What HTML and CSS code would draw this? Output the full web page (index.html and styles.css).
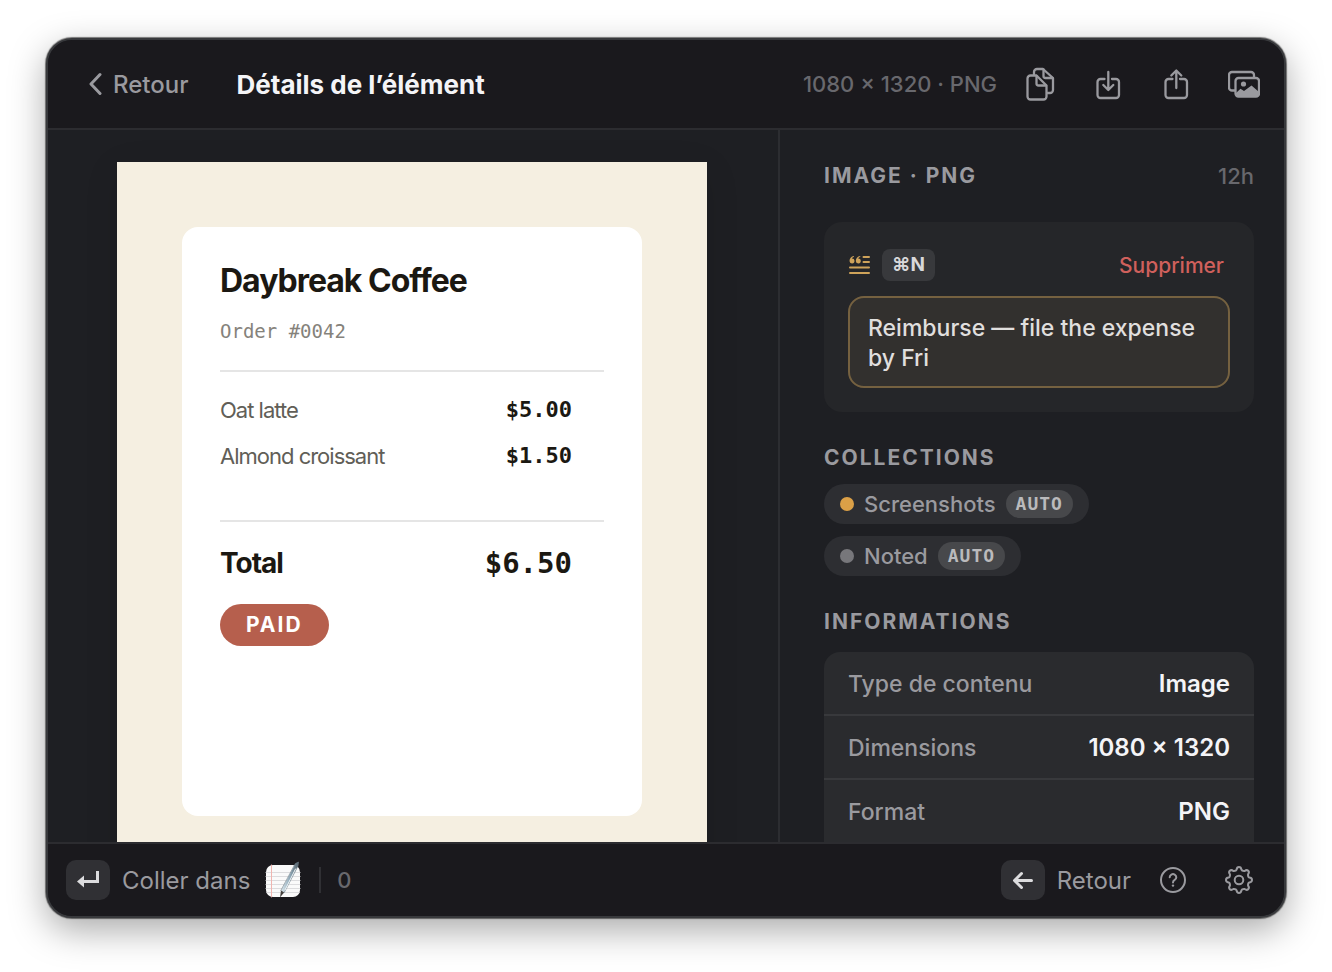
FILE: index.html
```html
<!DOCTYPE html>
<html lang="fr">
    <head>
        <meta charset="utf-8">
        <meta name="viewport" content="width=device-width, initial-scale=1">
        <title>Détails de l’élément</title>
        <link rel="stylesheet" href="styles.css">
    </head>
    <body>
        <div class="window">
            <header class="topbar">
                <button class="back" type="button">
                    <svg class="chevron" viewBox="0 0 14 24"><path d="M12 2.500 3 12l9 9.500"/></svg>
                    Retour
                </button>
                <h1>Détails de l’élément</h1>
                <span class="meta">1080 × 1320 · PNG</span>
                <div class="tools">
                    <button class="tool" type="button" aria-label="Copier">
                        <svg viewBox="0 0 32 34">
                            <path d="M10 7.500V5a3 3 0 0 1 3-3h6L29 11v12a3 3 0 0 1-3 3h-2.500"/>
                            <path d="M19.500 2.500v6.500a2 2 0 0 0 2 2h7"/>
                            <path d="M6.500 8.500h6L22.500 18.500V29.500a3 3 0 0 1-3 3h-13a3 3 0 0 1-3-3v-18a3 3 0 0 1 3-3z"/>
                            <path d="M12.500 9v7.500a2 2 0 0 0 2 2h7.500"/>
                        </svg>
                    </button>
                    <button class="tool" type="button" aria-label="Enregistrer">
                        <svg viewBox="0 0 32 34">
                            <path d="M12.500 12H8.500a3 3 0 0 0-3 3v13a3 3 0 0 0 3 3h15.500a3 3 0 0 0 3-3V15a3 3 0 0 0-3-3h-4"/>
                            <path d="M16.300 5v17.500M11.300 18l5 5 5-5"/>
                        </svg>
                    </button>
                    <button class="tool" type="button" aria-label="Partager">
                        <svg viewBox="0 0 32 34">
                            <path d="M12.500 12H8.500a3 3 0 0 0-3 3v13a3 3 0 0 0 3 3h15.500a3 3 0 0 0 3-3V15a3 3 0 0 0-3-3h-4"/>
                            <path d="M16.300 21V4M11.300 8.500l5-5 5 5"/>
                        </svg>
                    </button>
                    <button class="tool" type="button" aria-label="Images">
                        <svg viewBox="0 0 32 34">
                            <path d="M7 23.500H4a3 3 0 0 1-3-3V8a3 3 0 0 1 3-3h19a3 3 0 0 1 3 3v2.500"/>
                            <rect x="7.500" y="11" width="23.500" height="18.500" rx="3"/>
                            <circle class="solid" cx="15.500" cy="17" r="2.600"/>
                            <path class="solid" d="M8 26l4.500-4.300 3.500 2.300 7.500-5.500 7.500 6.500v2a3 3 0 0 1-3 3H11a3 3 0 0 1-3-3z"/>
                        </svg>
                    </button>
                </div>
            </header>

            <main class="content">
                <section class="preview">
                    <div class="shot">
                        <div class="receipt">
                            <h2>Daybreak Coffee</h2>
                            <p class="order">Order #0042</p>
                            <dl class="items">
                                <div class="item"><dt>Oat latte</dt><dd>$5.00</dd></div>
                                <div class="item"><dt>Almond croissant</dt><dd>$1.50</dd></div>
                            </dl>
                            <dl class="total">
                                <div class="item"><dt>Total</dt><dd>$6.50</dd></div>
                            </dl>
                            <span class="paid">PAID</span>
                        </div>
                    </div>
                </section>

                <aside class="details">
                    <div class="kind">
                        <h2 class="label">IMAGE · PNG</h2>
                        <span class="age">12h</span>
                    </div>

                    <div class="note">
                        <div class="note-head">
                            <svg class="quote" viewBox="0 0 22 20">
                                <path d="M15.500 2h5.500M15.500 7h5.500M2 12.500h19M2 18h19"/>
                                <path class="solid" d="M6 1C3 1.300 1.500 3.500 1.500 6a2.500 2.500 0 1 0 2.300-2.500C4.200 2.600 5 2 6 1.700zM12.300 1C9.300 1.300 7.800 3.500 7.800 6a2.500 2.500 0 1 0 2.300-2.500c.4-.9 1.200-1.500 2.200-1.800z"/>
                            </svg>
                            <kbd>⌘N</kbd>
                            <button class="delete" type="button">Supprimer</button>
                        </div>
                        <textarea rows="2" aria-label="Note" spellcheck="false">Reimburse — file the expense by Fri</textarea>
                    </div>

                    <h2 class="label">COLLECTIONS</h2>
                    <div class="chips">
                        <span class="chip"><i class="dot amber"></i>Screenshots<span class="auto">AUTO</span></span>
                        <span class="chip"><i class="dot"></i>Noted<span class="auto">AUTO</span></span>
                    </div>

                    <h2 class="label">INFORMATIONS</h2>
                    <dl class="info">
                        <div class="info-row"><dt>Type de contenu</dt><dd>Image</dd></div>
                        <div class="info-row"><dt>Dimensions</dt><dd>1080 × 1320</dd></div>
                        <div class="info-row"><dt>Format</dt><dd>PNG</dd></div>
                    </dl>
                </aside>
            </main>

            <footer class="bottombar">
                <button class="action" type="button">
                    <span class="key">
                        <svg viewBox="0 0 24 18"><path class="sharp" d="M21.500 0v10.500H7"/><path class="solid" d="M8 4.500v12l-7-6z"/></svg>
                    </span>
                    Coller dans
                    <svg class="notepad" viewBox="0 0 36 38">
                        <defs>
                            <linearGradient id="pen" x1="0" x2="1">
                                <stop offset="0" stop-color="#dce8ee"/>
                                <stop offset=".5" stop-color="#8fa9b8"/>
                                <stop offset="1" stop-color="#55636d"/>
                            </linearGradient>
                        </defs>
                        <rect x="1" y="4" width="34" height="32" rx="7" fill="#fafafa"/>
                        <path d="M1 11.500h34M1 15.500h34M1 19.500h34M1 23.500h34M1 27.500h34M2 31.500h32" stroke="#dcdcde"/>
                        <path d="M6.500 4v32" stroke="#f0b5b0"/>
                        <path d="M30.500 2.500 33.500 1l-.5 4-14 27-3-2z" fill="url(#pen)" stroke="#6c7c86" stroke-width=".6"/>
                        <path d="M30.500 8 20 29" stroke="#f4f8fa"/>
                        <path d="M16 29.500 19 31.500l-4 5z" fill="#45413e"/>
                    </svg>
                </button>
                <span class="count">0</span>
                <div class="spacer"></div>
                <button class="action" type="button">
                    <span class="key">
                        <svg viewBox="0 0 24 18"><path class="thick" d="M20.500 9.500H4M10.500 2.500l-7 7 7 7"/></svg>
                    </span>
                    Retour
                </button>
                <button class="round" type="button" aria-label="Aide">
                    <svg viewBox="0 0 28 28">
                        <circle cx="14" cy="14" r="12"/>
                        <path d="M10.700 11.200a3.300 3.100 0 1 1 5 2.700c-1.200.8-1.700 1.300-1.700 2.600"/>
                        <circle class="solid" cx="14" cy="19.600" r="1.200"/>
                    </svg>
                </button>
                <button class="round" type="button" aria-label="Réglages">
                    <svg viewBox="0 0 28 28">
                        <path d="M11.600 3.600Q11.900 1 14 1T16.400 3.600Q17 5.200 19.660 4.940Q21.700 3.300 23.190 4.810T23.060 8.340Q22.800 11 24.400 11.600Q27 11.900 27 14T24.400 16.400Q22.800 17 23.060 19.660Q24.700 21.700 23.190 23.190T19.660 23.060Q17 22.800 16.400 24.400Q16.100 27 14 27T11.600 24.400Q11 22.800 8.340 23.060Q6.300 24.700 4.810 23.190T4.940 19.660Q5.200 17 3.600 16.400Q1 16.100 1 14T3.600 11.600Q5.200 11 4.940 8.340Q3.300 6.300 4.810 4.810T8.340 4.940Q11 5.200 11.600 3.600z"/>
                        <circle cx="14" cy="14" r="4.300"/>
                    </svg>
                </button>
            </footer>
        </div>
    </body>
</html>
```
FILE: styles.css
```css
* {
    box-sizing: border-box;
}
body {
    display: flex;
    height: 100vh;
    margin: 0;
    padding: 38px 46px 54px;
    background-color: #fff;
    font-family: Inter, "Liberation Sans", sans-serif;
    font-size: 24px;
    color: #9a9a9f;
}
h1, h2, p, dl, dd {
    margin: 0;
}
button {
    padding: 0;
    border: none;
    background: none;
    font: inherit;
    color: inherit;
    cursor: pointer;
}
svg {
    display: block;
    fill: none;
    stroke: currentColor;
    stroke-width: 2;
    stroke-linecap: round;
    stroke-linejoin: round;
}
.solid {
    fill: currentColor;
    stroke: none;
}
.window {
    flex: 1;
    display: flex;
    flex-direction: column;
    min-width: 0;
    border: 2px solid #38393c;
    border-radius: 26px;
    background-color: #1e1f23;
    box-shadow: 0 0 1px 1px rgba(0, 0, 0, 0.5), 0 12px 36px rgba(0, 0, 0, 0.34);
    overflow: hidden;
}

/* Top bar */
.topbar {
    display: flex;
    align-items: center;
    height: 90px;
    padding: 0 24px 0 40px;
    border-bottom: 2px solid #2c2c30;
    background-color: #1a191d;
}
.back {
    display: flex;
    align-items: center;
    gap: 11px;
    margin-right: 48px;
    font-weight: 500;
}
.chevron {
    width: 14px;
    height: 24px;
    stroke-width: 3;
}
h1 {
    flex: 1;
    font-size: 26px;
    font-weight: 700;
    color: #f4f4f7;
}
.meta {
    margin-right: 27px;
    font-size: 22px;
    font-weight: 500;
    color: #68686d;
}
.tools {
    display: flex;
    gap: 36px;
}
.tool svg {
    width: 32px;
    height: 34px;
    stroke-width: 2.3;
}

/* Preview and details */
.content {
    flex: 1;
    display: grid;
    grid-template-columns: minmax(0, 1fr) 506px;
    min-height: 0;
}
.preview {
    display: flex;
    justify-content: center;
    align-items: flex-start;
    padding: 32px 34px 32px 32px;
    overflow: hidden;
}
.shot {
    width: 590px;
    padding: 65px 65px 67px;
    background-color: #f5efe1;
    box-shadow: 0 8px 32px rgba(0, 0, 0, 0.1);
}
.receipt {
    height: 589px;
    padding: 36px 38px;
    border-radius: 16px;
    background-color: #fff;
    color: #1b1812;
}
.receipt h2 {
    font-size: 32px;
    line-height: 36px;
    font-weight: 700;
    letter-spacing: -1px;
}
.order {
    margin-top: 20px;
    font-family: "DejaVu Sans Mono", monospace;
    font-size: 19px;
    line-height: 24px;
    color: #85827b;
}
.items {
    height: 150px;
    margin-top: 27px;
    padding-top: 15px;
    border-top: 2px solid #e5e5e5;
    font-size: 22px;
    line-height: 46px;
}
.items dt {
    color: #615e57;
    letter-spacing: -1px;
}
.item {
    display: flex;
    justify-content: space-between;
    padding-right: 32px;
}
.item dd {
    font-family: "DejaVu Sans Mono", monospace;
    font-weight: 700;
}
.total {
    padding-top: 21px;
    border-top: 2px solid #e5e5e5;
    font-size: 28px;
    line-height: 40px;
    font-weight: 700;
}
.total dt {
    letter-spacing: -1px;
}
.total dd {
    font-size: 29px;
}
.paid {
    display: inline-block;
    margin-top: 21px;
    padding: 0 26px;
    border-radius: 21px;
    background-color: #b65f4d;
    font-size: 21px;
    line-height: 42px;
    font-weight: 700;
    letter-spacing: 2px;
    color: #fff;
}
.details {
    padding: 32px 30px 0 44px;
    border-left: 2px solid #2c2d31;
    overflow: hidden;
}
.label {
    font-size: 21px;
    line-height: 28px;
    font-weight: 700;
    letter-spacing: 2px;
}
.kind {
    display: flex;
    justify-content: space-between;
    align-items: center;
}
.age {
    font-size: 22px;
    line-height: 28px;
    font-weight: 500;
    color: #68686d;
}
.note {
    margin: 32px 0;
    padding: 27px 24px 24px;
    border-radius: 18px;
    background-color: #252629;
}
.note-head {
    display: flex;
    align-items: center;
    height: 32px;
    margin-bottom: 15px;
}
.quote {
    width: 22px;
    height: 20px;
    margin-right: 12px;
    color: #cfa35a;
}
kbd {
    padding: 0 10px;
    border-radius: 8px;
    background-color: #38393c;
    font-family: inherit;
    font-size: 19px;
    line-height: 32px;
    font-weight: 700;
    color: #d8d8da;
}
.delete {
    margin-left: auto;
    padding-right: 6px;
    font-size: 21px;
    font-weight: 500;
    color: #d0605c;
}
textarea {
    display: block;
    width: 100%;
    height: 92px;
    padding: 15px 18px 13px;
    border: 2px solid #756140;
    border-radius: 16px;
    outline: none;
    background-color: #32302e;
    font: inherit;
    font-size: 23px;
    font-weight: 500;
    line-height: 30px;
    color: #e0dfde;
    resize: none;
    overflow: hidden;
}
.chips {
    display: flex;
    flex-direction: column;
    align-items: flex-start;
    gap: 12px;
    margin: 12px 0 32px;
}
.chip {
    display: flex;
    align-items: center;
    height: 40px;
    padding: 0 16px;
    border-radius: 20px;
    background-color: #2d2e32;
    font-size: 22px;
    font-weight: 500;
}
.dot {
    width: 14px;
    height: 14px;
    margin-right: 10px;
    border-radius: 50%;
    background-color: #77777b;
}
.dot.amber {
    background-color: #dba047;
}
.auto {
    margin-left: 10px;
    padding: 0 10px;
    border-radius: 14px;
    background-color: #47484b;
    font-family: "DejaVu Sans Mono", monospace;
    font-size: 18px;
    line-height: 28px;
    font-weight: 700;
    letter-spacing: 1px;
    color: #bababc;
}
.info {
    margin-top: 16px;
    border-radius: 16px 16px 0 0;
    background-color: #2a2b2e;
}
.info-row {
    display: flex;
    justify-content: space-between;
    height: 64px;
    padding: 0 24px;
    border-bottom: 2px solid #38393c;
    line-height: 64px;
}
.info-row dt {
    font-size: 23px;
    font-weight: 500;
}
.info-row dd {
    font-weight: 600;
    color: #f4f4f7;
}

/* Bottom bar */
.bottombar {
    display: flex;
    align-items: center;
    height: 74px;
    padding: 0 31px 0 18px;
    border-top: 2px solid #2c2c30;
    background-color: #1a191d;
}
.action {
    display: flex;
    align-items: center;
}
.key {
    display: grid;
    place-items: center;
    width: 44px;
    height: 40px;
    margin-right: 12px;
    border-radius: 10px;
    background-color: #303034;
    color: #dcdcde;
}
.key svg {
    width: 24px;
    height: 18px;
}
.sharp {
    stroke-linecap: butt;
    stroke-linejoin: miter;
    stroke-width: 3;
}
.thick {
    stroke-width: 3;
}
.notepad {
    width: 36px;
    height: 38px;
    margin-left: 15px;
    stroke: none;
    stroke-width: 1;
}
.count {
    margin-left: 18px;
    padding-left: 16px;
    border-left: 2px solid #303034;
    font-size: 22px;
    line-height: 26px;
    font-weight: 500;
    color: #68686d;
}
.spacer {
    flex: 1;
}
.round {
    margin-left: 28px;
}
.round + .round {
    margin-left: 38px;
}
.round svg {
    width: 28px;
    height: 28px;
}
```
